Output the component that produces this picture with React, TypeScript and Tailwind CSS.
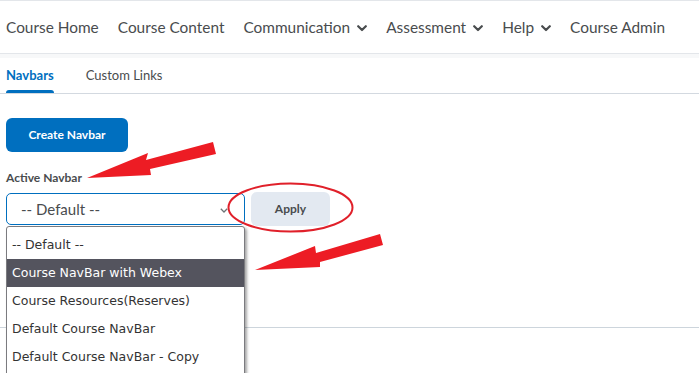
const navItems = [
  { label: "Course Home", menu: false },
  { label: "Course Content", menu: false },
  { label: "Communication", menu: true },
  { label: "Assessment", menu: true },
  { label: "Help", menu: true },
  { label: "Course Admin", menu: false },
];

const options = [
  "-- Default --",
  "Course NavBar with Webex",
  "Course Resources(Reserves)",
  "Default Course NavBar",
  "Default Course NavBar - Copy",
];

const Chevron = () => (
  <svg width="10" height="7" viewBox="0 0 10 7" className="mt-[2px]">
    <path d="M1.2 1.2 L5 5 L8.8 1.2" fill="none" stroke="#494c4e" strokeWidth="2.2" strokeLinecap="round" strokeLinejoin="round" />
  </svg>
);

const App = () => {
  return (
    <div className="relative w-[699px] h-[373px] overflow-hidden bg-white font-['Lato',sans-serif] text-[#494c4e]">
      {/* top nav */}
      <header className="h-[54px] border-t border-b border-[#e3e6ea] flex items-center gap-[19px] px-[6px] pt-[1px] whitespace-nowrap">
        {navItems.map((item) => (
          <div key={item.label} className="shrink-0 flex items-center gap-[7px] text-[15.4px]">
            <span>{item.label}</span>
            {item.menu && <Chevron />}
          </div>
        ))}
      </header>
      <div className="h-[4px] bg-[#f7f8f9]" />

      {/* tabs */}
      <div className="h-[36px] border-b border-[#d3d9e0] flex items-end gap-[32px] px-[6px]">
        <div className="h-full flex items-center relative text-[13px] font-bold text-[#006fbf]">
          Navbars
          <div className="absolute left-0 right-0 bottom-0 h-[3px] bg-[#006fbf] rounded-t-sm" />
        </div>
        <div className="h-full flex items-center text-[13px]">Custom Links</div>
      </div>

      {/* body */}
      <div className="px-[6px] pt-[24px]">
        <button className="w-[122px] h-[34px] rounded-[6px] bg-[#006fbf] text-white text-[12px] font-bold">
          Create Navbar
        </button>
        <div className="mt-[19px] text-[12px] font-bold leading-[14px]">Active Navbar</div>
        <div className="mt-[7px] flex items-center gap-[6px]">
          <div className="relative">
            <div className="w-[239px] h-[32px] rounded-[5px] border-[1.5px] border-[#006fbf] flex items-center justify-between pl-[14px] pr-[16px] text-[15px]">
              <span>-- Default --</span>
              <svg width="8" height="5" viewBox="0 0 8 5" className="mt-[3px]">
                <path d="M0.8 0.8 L4 4 L7.2 0.8" fill="none" stroke="#6e7376" strokeWidth="1.3" />
              </svg>
            </div>
            {/* open list */}
            <div className="absolute left-0 top-[33px] w-[239px] bg-white border border-[#7b7b7f] rounded-t-[3px] shadow-[2px_2px_3px_rgba(0,0,0,0.35)] z-10 pt-[4px] pb-[20px] font-['DejaVu_Sans',sans-serif] text-[12.5px] text-[#333]">
              {options.map((o, i) => (
                <div
                  key={o}
                  className={`h-[28px] flex items-center px-[5px] ${i === 1 ? "bg-[#54545e] text-white" : ""}`}
                >
                  {o}
                </div>
              ))}
            </div>
          </div>
          <button className="w-[79px] h-[34px] rounded-[6px] bg-[#e3e9f1] text-[12px] font-bold text-[#494c4e]">
            Apply
          </button>
        </div>
      </div>

      <div className="mt-[101px] border-t border-[#cdd5dc]" />

      {/* annotations */}
      <svg className="absolute inset-0 pointer-events-none z-20" width="699" height="373">
        <polygon points="87,178 148,153 146,160 213,142 216,154 150,169 151,175" fill="#ed1c24" />
        <polygon points="255,270 315,246 316,253 380,234 383,245 320,262 320,267" fill="#ed1c24" />
        <ellipse cx="290.5" cy="207.5" rx="62" ry="24" fill="none" stroke="#e0202a" strokeWidth="2" />
      </svg>
    </div>
  );
};

export default App;
